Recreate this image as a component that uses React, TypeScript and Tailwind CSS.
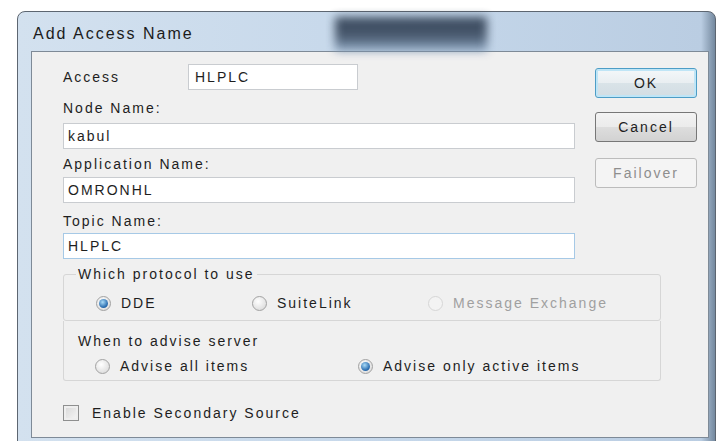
import React from "react";

const sans = "font-['Liberation_Sans',Arial,sans-serif]";

type RadioProps = {
  label: string;
  checked?: boolean;
  disabled?: boolean;
  className?: string;
};

const Radio = ({ label, checked, disabled, className }: RadioProps) => (
  <div className={`flex items-center h-[20px] ${className ?? ""}`}>
    <span
      className={`w-[15px] h-[15px] rounded-full border flex items-center justify-center shrink-0 ${
        disabled
          ? "border-[#d6d6d6] bg-[#f3f3f3]"
          : "border-[#a2a2a2] bg-[radial-gradient(circle_at_40%_35%,#ffffff,#d4d4d4)]"
      }`}
    >
      {checked && (
        <span className="w-[9px] h-[9px] rounded-full bg-[radial-gradient(circle_at_40%_35%,#a9dbf7,#2a6db0_65%,#1b4d86)]" />
      )}
    </span>
    <span className={`ml-[10px] ${disabled ? "text-[#a0a0a0]" : "text-[#1e1e1e]"}`}>
      {label}
    </span>
  </div>
);

type BtnProps = { label: string; variant?: "default" | "focus" | "disabled"; className?: string };

const Button = ({ label, variant = "default", className }: BtnProps) => {
  const look =
    variant === "focus"
      ? "border-[#4d9dc6] shadow-[inset_0_0_0_2px_#bfe5f6] bg-[linear-gradient(#f4f8fa_0%,#e9eef1_50%,#d9e3e8_51%,#d3dde3_100%)] text-[#1e1e1e]"
      : variant === "disabled"
      ? "border-[#bcbcbc] bg-[#f4f4f4] text-[#8e8e8e]"
      : "border-[#777777] bg-[linear-gradient(#f3f3f3_0%,#ebebeb_50%,#dddddd_51%,#d2d2d2_100%)] text-[#1e1e1e]";
  return (
    <div
      className={`w-[102px] h-[30px] rounded-[3px] border flex items-center justify-center ${look} ${className ?? ""}`}
    >
      {label}
    </div>
  );
};

type BoxProps = { value: string; className?: string; focused?: boolean };

const TextBox = ({ value, className, focused }: BoxProps) => (
  <div
    className={`h-[26px] bg-white border flex items-center pl-[4px] text-[#1e1e1e] ${
      focused ? "border-[#a6c9e6]" : "border-[#c9ccd0]"
    } ${className ?? ""}`}
  >
    {value}
  </div>
);

export default function App() {
  return (
    <div
      className={`w-[716px] h-[441px] overflow-hidden bg-white pt-[11px] pl-[17px] ${sans} text-[14px] leading-[18px] tracking-[2px]`}
    >
      {/* dialog frame */}
      <div className="w-[699px] h-[445px] rounded-t-[8px] border border-[#5d6671] bg-[linear-gradient(90deg,#d3e1ef_0%,#c5d7ea_55%,#bacde2_98%,#74899f_100%)] flex flex-col">
        <div className="h-[39px] flex items-center pl-[15px] pt-[4px]">
          <div className="w-[302px] text-[16px] text-[#1b1b1b]">Add Access Name</div>
          <div className="w-[152px] h-[34px] blur-[5px] bg-[linear-gradient(180deg,#2b3a4e_0%,#3b4b60_55%,#8aa4c0_100%)] opacity-90" />
        </div>

        {/* client area */}
        <div className="ml-[13px] w-[678px] h-[387px] border border-[#7e8a97] bg-[#f0f0f0] pl-[31px] pr-[11px] pt-[12px]">
          <div className="flex">
            <div className="w-[512px] flex flex-col">
              <div className="flex items-center h-[26px]">
                <div className="w-[125px] text-[#1e1e1e]">Access</div>
                <TextBox value="HLPLC" className="w-[170px] pl-[6px]" />
              </div>
              <div className="mt-[9px] text-[#1e1e1e]">Node Name:</div>
              <TextBox value="kabul" className="mt-[6px] h-[25px] pl-[2px]" />
              <div className="mt-[6px] text-[#1e1e1e]">Application Name:</div>
              <TextBox value="OMRONHL" className="mt-[4px]" />
              <div className="mt-[9px] text-[#1e1e1e]">Topic Name:</div>
              <TextBox value="HLPLC" className="mt-[3px]" focused />
            </div>
            <div className="ml-[20px] pt-[4px] flex flex-col">
              <Button label="OK" variant="focus" />
              <Button label="Cancel" className="mt-[14px]" />
              <Button label="Failover" variant="disabled" className="mt-[16px]" />
            </div>
          </div>

          <fieldset className="mt-[6px] w-[598px] border border-[#d6d6d6] rounded-[3px] pb-[7px]">
            <legend className="ml-[12px] px-[2px] text-[#1e1e1e]">Which protocol to use</legend>
            <div className="flex mt-[10px] pl-[32px]">
              <Radio label="DDE" checked className="w-[156px]" />
              <Radio label="SuiteLink" className="w-[176px]" />
              <Radio label="Message Exchange" disabled />
            </div>
          </fieldset>

          <div className="w-[598px] border-x border-b border-[#d6d6d6] rounded-b-[3px] pt-[11px] pb-[4px]">
            <div className="pl-[14px] text-[#1e1e1e]">When to advise server</div>
            <div className="flex mt-[6px] pl-[31px]">
              <Radio label="Advise all items" className="w-[263px]" />
              <Radio label="Advise only active items" checked />
            </div>
          </div>

          <div className="mt-[22px] flex items-center h-[20px]">
            <span className="w-[16px] h-[16px] border border-[#8e8f8f] bg-[linear-gradient(135deg,#d6d6d6,#f7f7f7)] shadow-[inset_0_0_0_2px_#eeeeee]" />
            <span className="ml-[13px] text-[#1e1e1e]">Enable Secondary Source</span>
          </div>
        </div>
      </div>
    </div>
  );
}
